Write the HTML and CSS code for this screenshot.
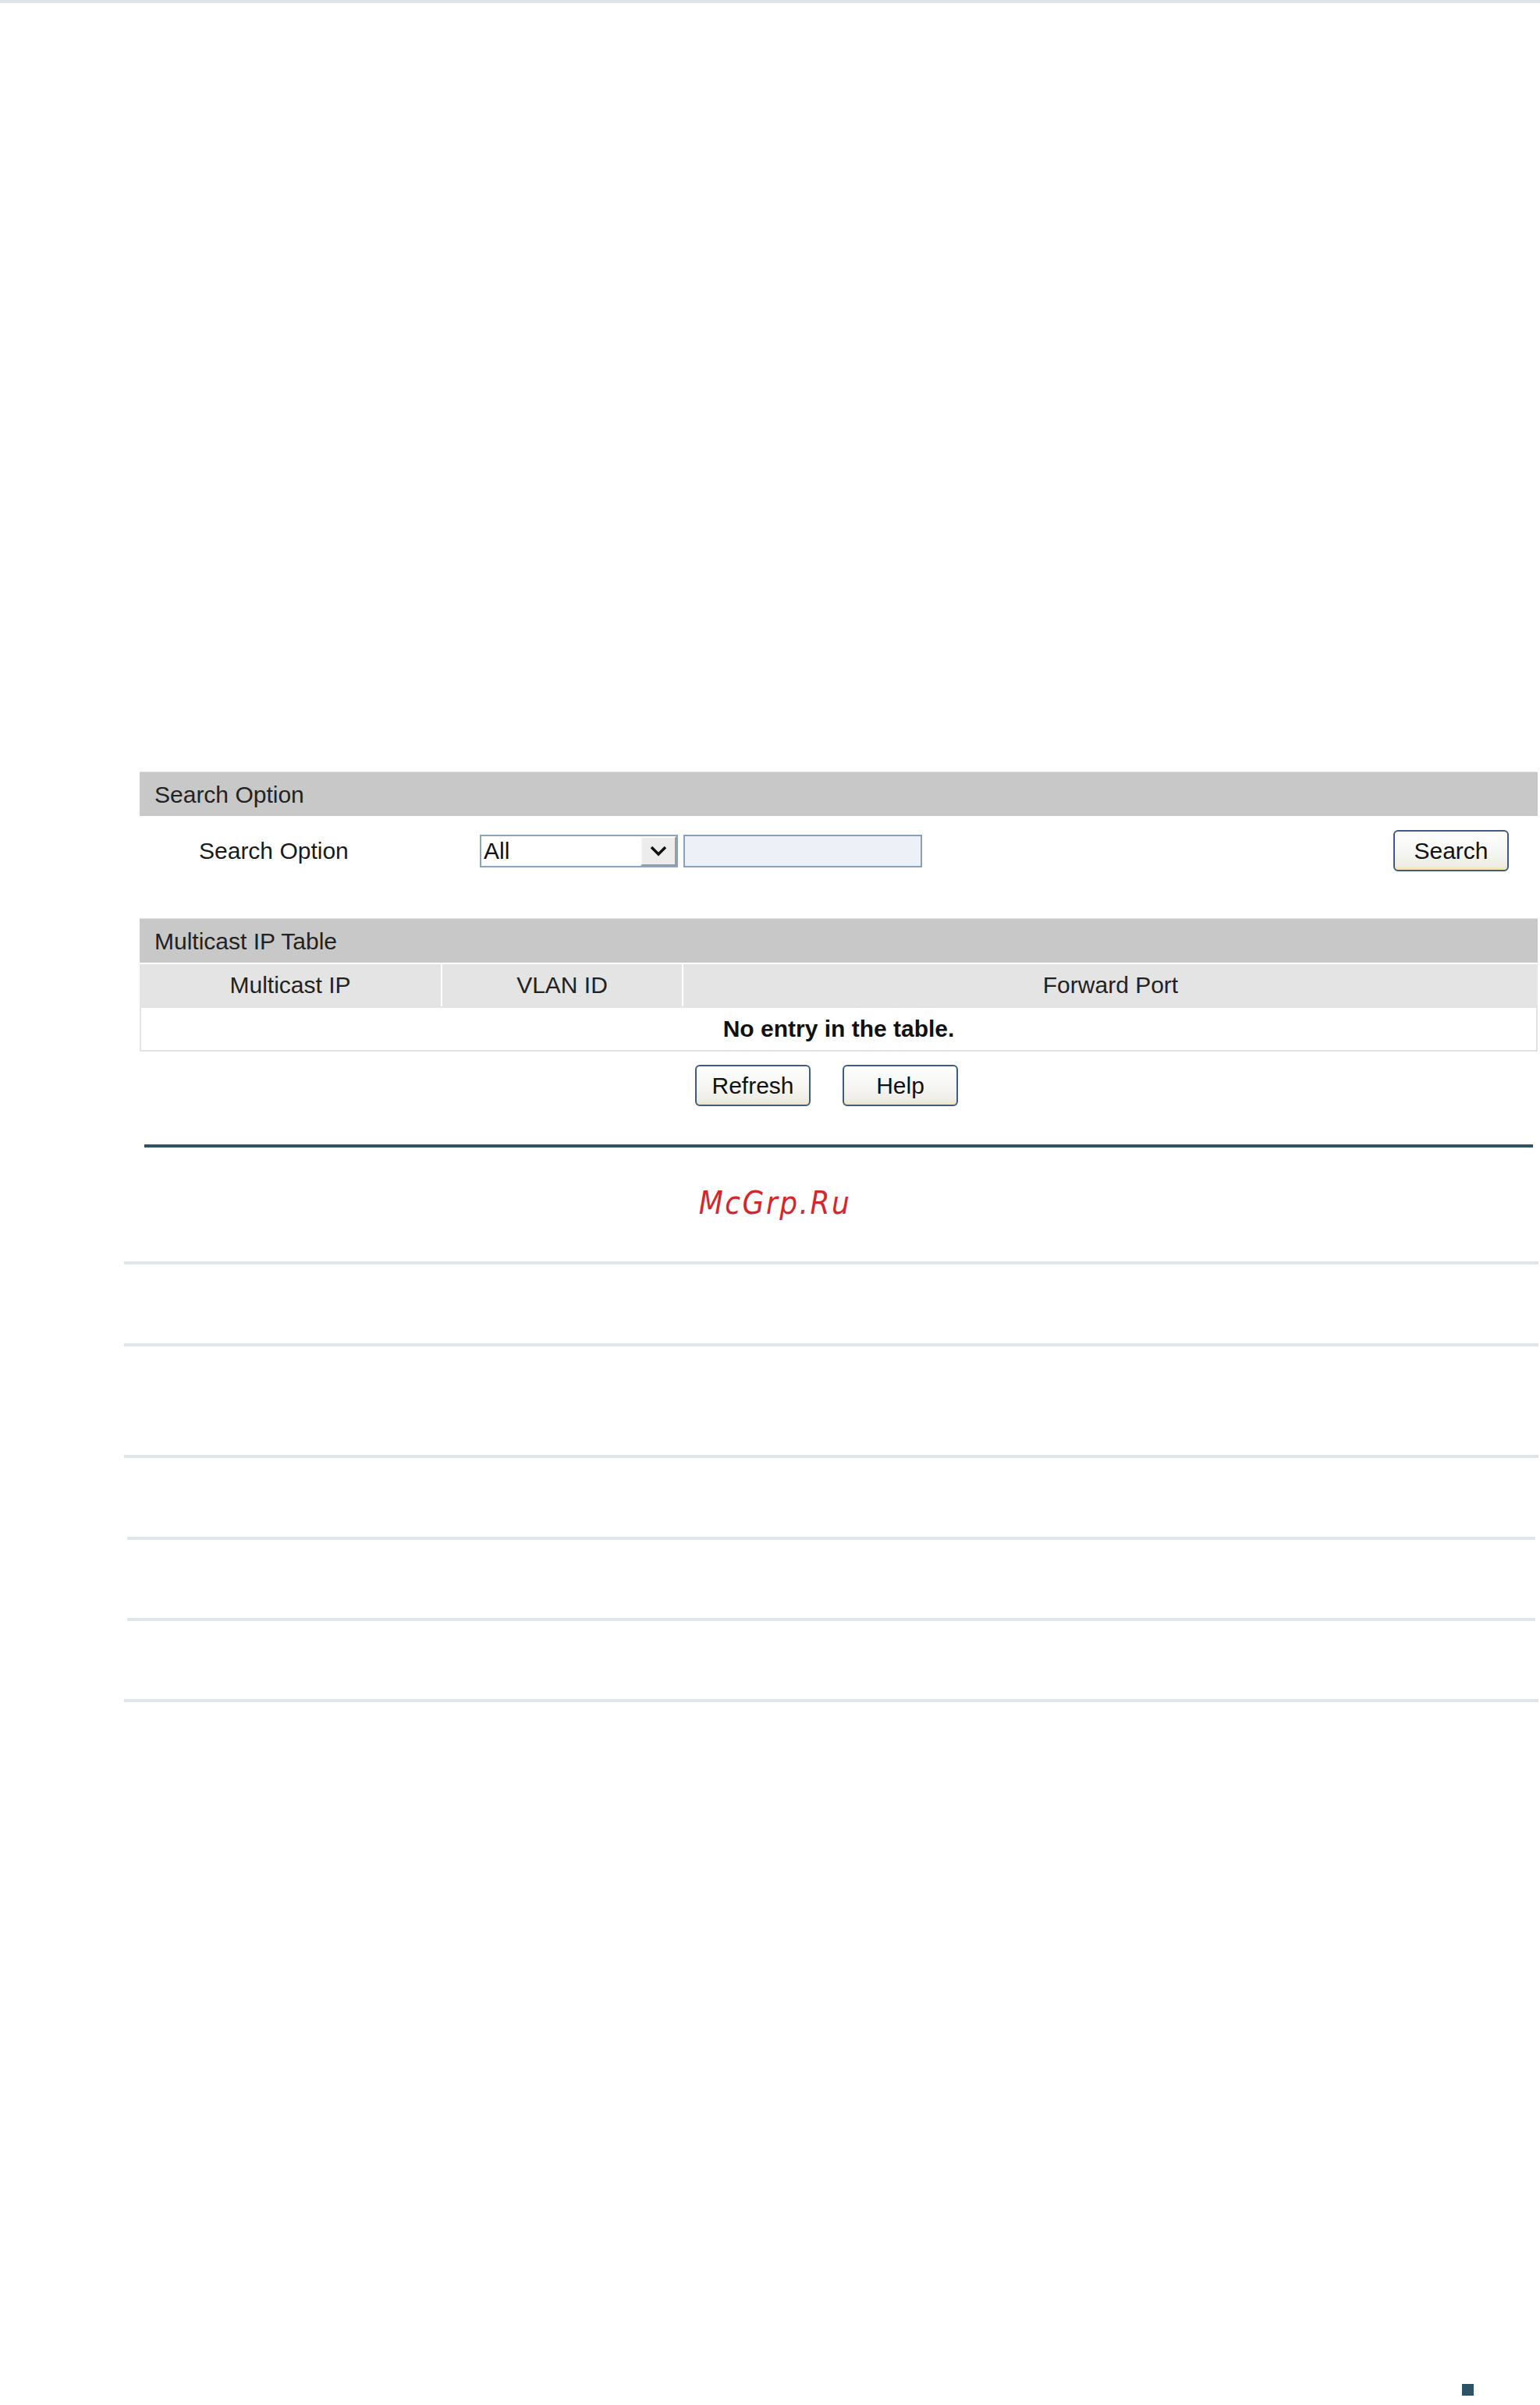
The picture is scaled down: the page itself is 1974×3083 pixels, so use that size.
FILE: index.html
```html
<!DOCTYPE html>
<html lang="en">
<head>
  <meta charset="UTF-8">
  <title>Multicast IP Table</title>
  <link rel="stylesheet" href="styles.css">
</head>
<body>
  <div class="top-rule"></div>

  <div class="panel">
    <div class="bar">Search Option</div>
    <div class="search-row">
      <label class="field-label" for="searchType">Search Option</label>
      <div class="select-box">
        <select id="searchType">
          <option>All</option>
          <option>Multicast IP</option>
          <option>VLAN ID</option>
          <option>Port</option>
        </select>
        <span class="select-arrow">
          <svg width="24" height="16" viewBox="0 0 24 16"><path d="M3 3 L12 12 L21 3" fill="none" stroke="#111" stroke-width="3.5"/></svg>
        </span>
      </div>
      <input class="search-text" type="text">
      <button class="btn btn-search">Search</button>
    </div>

    <div class="bar">Multicast IP Table</div>
    <table class="ip-table">
      <thead>
        <tr>
          <th class="col-ip">Multicast IP</th>
          <th class="col-vlan">VLAN ID</th>
          <th>Forward Port</th>
        </tr>
      </thead>
      <tbody>
        <tr>
          <td colspan="3" class="empty">No entry in the table.</td>
        </tr>
      </tbody>
    </table>

    <div class="actions">
      <button class="btn">Refresh</button>
      <button class="btn">Help</button>
    </div>
  </div>

  <div class="section-rule"></div>
  <p class="watermark">McGrp.Ru</p>

  <div class="blank-rows">
    <div class="blank-row"></div>
    <div class="blank-row tall"></div>
    <div class="blank-row"></div>
    <div class="blank-row inset"></div>
    <div class="blank-row inset"></div>
    <div class="blank-row last"></div>
  </div>

  <div class="page-mark"></div>
</body>
</html>
```

FILE: styles.css
```css
body {
  margin: 0;
  font-family: "Liberation Sans", Arial, sans-serif;
  font-size: 30px;
  color: #1a1a1a;
  background: #fff;
}
.top-rule {
  height: 4px;
  background-color: #dde6eb;
}
.panel {
  width: 1792px;
  margin: 985px 0 0 179px;
}
.bar {
  height: 57px;
  line-height: 57px;
  padding-left: 19px;
  background-color: #c8c8c8;
  border-top: 1px solid #e2e2e2;
  box-sizing: border-box;
  color: #222;
}
.search-row {
  display: flex;
  align-items: center;
  height: 53px;
  padding: 18px 37px 60px 0;
}
.field-label {
  width: 360px;
  padding-left: 76px;
}
.select-box {
  position: relative;
  width: 254px;
  height: 42px;
  box-sizing: border-box;
  border: 2px solid #8aa4c2;
  background: #fff;
}
.select-box select {
  appearance: none;
  -webkit-appearance: none;
  width: 100%;
  height: 100%;
  border: 0;
  padding: 0 0 0 3px;
  background: transparent;
  font: inherit;
  color: #111;
  outline: none;
}
.select-arrow {
  position: absolute;
  top: 0;
  right: 0;
  width: 46px;
  height: 38px;
  box-sizing: border-box;
  border: 2px solid #9a9a9a;
  border-top-color: #fafafa;
  border-left-color: #fafafa;
  background-color: #ececec;
  display: flex;
  align-items: center;
  justify-content: center;
  pointer-events: none;
}
.search-text {
  width: 306px;
  height: 42px;
  box-sizing: border-box;
  margin-left: 7px;
  border: 2px solid #86a0bd;
  background-color: #eef0f8;
  font: inherit;
}
.btn {
  width: 148px;
  height: 53px;
  box-sizing: border-box;
  border: 2px solid #3e5b88;
  border-radius: 6px;
  background: linear-gradient(#ffffff 0%, #f4f4f1 60%, #ebe9e0 100%);
  box-shadow: inset 0 -4px 0 -1px #f3e6b8;
  font: inherit;
  color: #111;
  padding: 0;
}
.btn-search {
  margin-left: auto;
}
.ip-table {
  width: 100%;
  margin-top: 2px;
  border-collapse: separate;
  border-spacing: 0;
}
.ip-table th {
  height: 54px;
  padding: 0;
  font-weight: normal;
  background-color: #e4e4e4;
  color: #222;
}
.ip-table .col-ip {
  width: 386px;
  border-right: 2px solid #fff;
}
.ip-table .col-vlan {
  width: 307px;
  border-right: 2px solid #fff;
}
.ip-table td {
  height: 54px;
  padding: 0;
  border: 2px solid #e2e2e2;
  text-align: center;
}
.empty {
  font-weight: bold;
  color: #111;
}
.actions {
  display: flex;
  justify-content: center;
  gap: 41px;
  margin-top: 17px;
  padding-right: 31px;
}
.section-rule {
  width: 1780px;
  height: 4px;
  margin: 49px 0 0 185px;
  background-color: #2e5466;
}
.watermark {
  margin: 47px 0 0;
  padding-left: 13px;
  text-align: center;
  font-family: "DejaVu Sans Condensed", "DejaVu Sans", sans-serif;
  font-style: italic;
  font-size: 40px;
  letter-spacing: 2.5px;
  line-height: 48px;
  color: #d6262b;
}
.blank-rows {
  margin-top: 51px;
}
.blank-row {
  height: 105px;
  margin-left: 159px;
  width: 1813px;
  border-top: 4px solid #dde6ea;
  box-sizing: border-box;
}
.blank-row.tall {
  height: 143px;
}
.blank-row.inset {
  height: 104px;
  margin-left: 163px;
  width: 1805px;
}
.blank-row.last {
  height: 4px;
}
.page-mark {
  width: 15px;
  height: 15px;
  margin: 874px 0 0 1874px;
  background-color: #2b5566;
}
```
